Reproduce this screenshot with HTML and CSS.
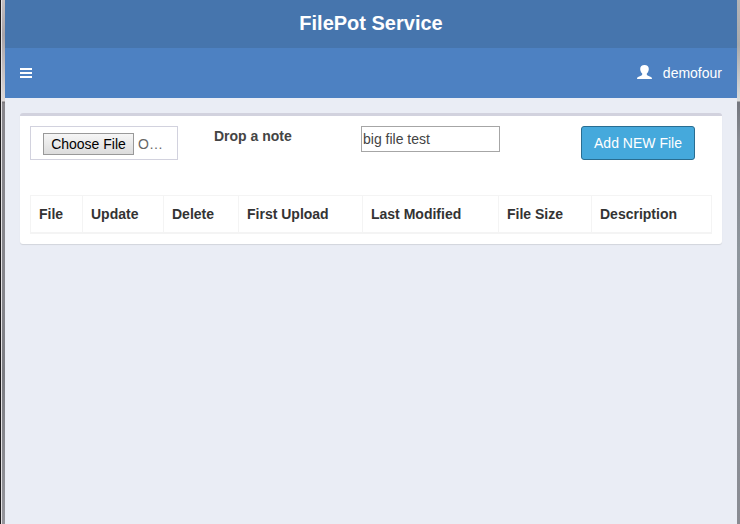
FILE: index.html
```html
<!DOCTYPE html>
<html lang="en">
<head>
<meta charset="utf-8">
<title>FilePot Service</title>
<link rel="stylesheet" href="styles.css">
</head>
<body>
<div class="frame">
  <div class="edge edge-left"></div>
  <div class="app">
    <header class="logo">FilePot Service</header>
    <nav class="navbar">
      <svg class="menu" width="12" height="10" viewBox="0 0 12 10" fill="#fff" shape-rendering="crispEdges"><path d="M0 0h12v2H0zM0 4h12v2H0zM0 8h12v2H0z"/></svg>
      <div class="user">
        <svg width="15" height="14" viewBox="0 0 15 14" fill="#fff"><path d="M7.500 0C10.200 0 11.800 1.500 11.800 4c0 1.900-.8 3.500-2 4.500v1c0 .5.300.8.8 1l2.700 1.200c1.100.4 1.700 1 1.700 2.300H0c0-1.300.6-1.900 1.700-2.300l2.700-1.200c.5-.2.8-.5.8-1v-1C4 7.500 3.200 5.900 3.200 4 3.200 1.500 4.800 0 7.500 0z"/></svg>
        <span>demofour</span>
      </div>
    </nav>
    <main class="content">
      <section class="box">
        <div class="form">
          <div class="file"><span class="choose">Choose File</span><span class="filename">O…</span></div>
          <label class="label" for="note">Drop a note</label>
          <input class="note" id="note" type="text" value="big file test">
          <button class="add" type="button">Add NEW File</button>
        </div>
        <table class="table">
          <colgroup><col class="c-file"><col class="c-update"><col class="c-delete"><col class="c-first"><col class="c-last"><col class="c-size"><col></colgroup>
          <thead><tr><th>File</th><th>Update</th><th>Delete</th><th>First Upload</th><th>Last Modified</th><th>File Size</th><th>Description</th></tr></thead>
        </table>
      </section>
    </main>
  </div>
  <div class="edge edge-right"></div>
</div>
</body>
</html>
```
FILE: styles.css
```css
* { box-sizing: border-box; }
body { margin: 0; font: 14px/20px "Liberation Sans", Arial, sans-serif; color: #333; }
.frame { display: flex; height: 524px; overflow: hidden; }
.edge { flex: none; }
.edge-left { width: 5px; border-left: 1px solid #1c1a1c; box-shadow: inset 1px 0 #e4e2e4; background: linear-gradient(#c4bfc1, #a9a4a8 35px, #ded9d9 101px, #777478 102px, #88868c 104px, #85858b 300px, #7b7c82 375px, #96969c); }
.edge-right { width: 3px; background: linear-gradient(#b5b5b7, #aaa 45px, #dcdcdc 101px, #74777e 102px, #868990 140px, #8e959c 250px, #898b92); }
.app { flex: 1; background: #eaedf5; }
.logo { height: 48px; background: #4675ad; color: #fff; font-size: 20px; font-weight: bold; line-height: 46px; text-align: center; }
.navbar { height: 50px; background: #4d81c2; color: #fff; display: flex; align-items: center; justify-content: space-between; padding: 0 15px; }
.user { display: flex; align-items: center; gap: 11px; }
.user svg { margin-top: -2px; }
.content { padding: 15px; }
.box { height: 131px; padding: 10px; background: #fff; border-top: 3px solid #d2d2de; border-radius: 3px; box-shadow: 0 1px 1px rgba(0,0,0,.1); }
.form { display: flex; align-items: flex-start; height: 69px; }
.file { width: 148px; height: 34px; border: 1px solid #d2d2de; padding: 6px 12px; display: flex; align-items: flex-start; gap: 4px; color: #666; }
.choose { width: 91px; height: 22px; border: 1px solid #999; background: linear-gradient(#f6f6f6, #dcdcdc); color: #000; text-align: center; line-height: 21px; white-space: nowrap; }
.filename { line-height: 22px; }
.label { width: 147px; margin-left: 36px; font-weight: bold; color: #444; }
.note { width: 139px; height: 26px; border: 1px solid #a6a6a6; padding: 1px; font: inherit; color: #444; background: #fff; }
.add { width: 114px; height: 34px; margin-left: 81px; padding: 0; border: 1px solid #296d91; border-radius: 3px; background: #45a9dc; color: #fff; font: inherit; }
.table { width: 682px; table-layout: fixed; border-collapse: collapse; border: 1px solid #f4f4f4; }
.table th { height: 37px; padding: 1px 8px 0; border: 1px solid #f4f4f4; border-bottom-width: 2px; text-align: left; white-space: nowrap; }
.c-file { width: 52px; }
.c-update { width: 81px; }
.c-delete { width: 75px; }
.c-first { width: 124px; }
.c-last { width: 136px; }
.c-size { width: 93px; }
```
